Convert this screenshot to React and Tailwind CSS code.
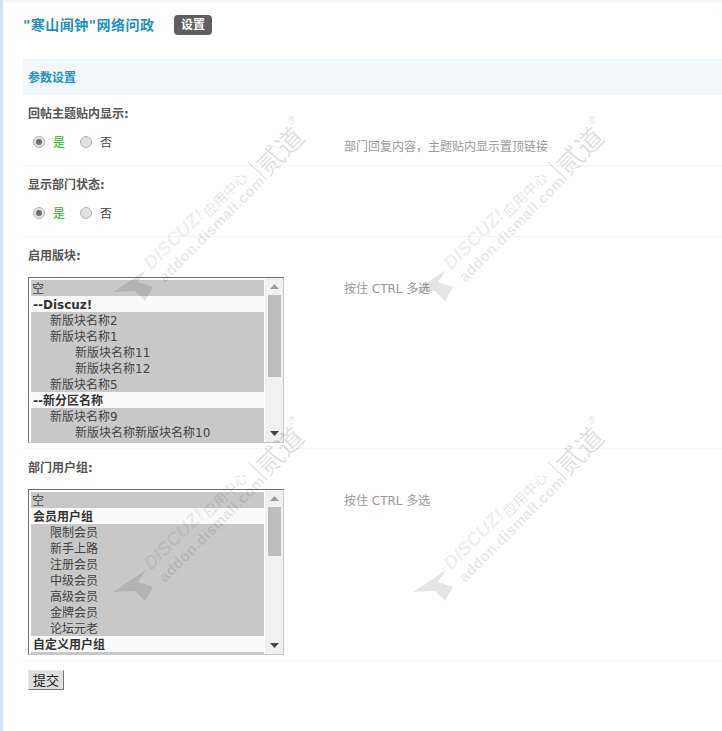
const font = { fontFamily: '"DejaVu Sans","Noto Sans CJK SC",sans-serif' };

function Watermark() {
  return (
    <svg width="300" height="300" viewBox="0 0 300 300" className="block overflow-visible shrink-0">
      <polygon points="113,292 146,270 138,282 153,287 145,301 135,291" fill="#000" fillOpacity="0.1" />
      <g fill="#000">
        <text transform="translate(151,271) rotate(-45)" fillOpacity="0.08" fontFamily="Liberation Sans" fontStyle="italic" fontWeight="700" fontSize="19">DISCUZ!</text>
        <text transform="translate(209,218) rotate(-45)" fillOpacity="0.12" fontFamily="Noto Sans CJK SC" fontSize="14">应用中心</text>
        <text transform="translate(165,283) rotate(-45)" fillOpacity="0.1" fontFamily="Liberation Sans" fontWeight="700" fontSize="15" letterSpacing="0.4">addon.dismall.com</text>
        <text transform="translate(268,177) rotate(-45)" fillOpacity="0.12" fontFamily="Noto Sans CJK SC" fontSize="27">贰道</text>
        <text transform="translate(288,124)" fillOpacity="0.16" fontFamily="Liberation Sans" fontSize="10">®</text>
      </g>
      <line x1="248" y1="162" x2="267" y2="180" stroke="#000" strokeOpacity="0.18" strokeWidth="1" />
    </svg>
  );
}

function Radio({ checked }) {
  return (
    <span className="w-[12px] h-[12px] rounded-full border border-[#b4b4b4] bg-[#e2e2e2] flex items-center justify-center shrink-0">
      {checked && <span className="w-[6px] h-[6px] rounded-full bg-[#6e6e6e]" />}
    </span>
  );
}

function RadioRow() {
  return (
    <div className="flex items-center h-[22px] pl-[5px] text-[12px]">
      <Radio checked />
      <span className="ml-[8px] pt-[2px] text-[#22bb22]">是</span>
      <span className="ml-[15px]"><Radio /></span>
      <span className="ml-[8px] pt-[2px] text-[#444444]">否</span>
    </div>
  );
}

function Arrow({ down }) {
  return (
    <div className="h-[17px] flex items-center justify-center shrink-0">
      <svg width="9" height="5" viewBox="0 0 9 5">
        <polygon points={down ? "0,0 9,0 4.5,5" : "0,5 9,5 4.5,0"} fill={down ? "#444444" : "#a0a0a0"} />
      </svg>
    </div>
  );
}

function ListBox({ rows, thumbHeight }) {
  return (
    <div className="w-[256px] h-[166px] border-t border-l border-t-[#6f6f6f] border-l-[#6f6f6f] border-r border-b border-r-[#c8c8c8] border-b-[#c8c8c8] bg-white flex pl-[2px] pt-[2px] overflow-hidden">
      <div className="w-[233px] h-[162px] overflow-hidden shrink-0">
        {rows.map((r, i) => (
          <div
            key={i}
            className={r.group
              ? "h-[16px] leading-[18px] overflow-hidden text-[12px] font-bold text-[#333333] pl-[2px] bg-[#fafafa] whitespace-nowrap"
              : r.level === 2
                ? "h-[16px] leading-[18px] overflow-hidden text-[12px] text-[#444444] pl-[44px] bg-[#c8c8c8] whitespace-nowrap"
                : r.level === 1
                  ? "h-[16px] leading-[18px] overflow-hidden text-[12px] text-[#444444] pl-[19px] bg-[#c8c8c8] whitespace-nowrap"
                  : "h-[16px] leading-[18px] overflow-hidden text-[12px] text-[#444444] pl-[1px] bg-[#c8c8c8] whitespace-nowrap"}
          >
            {r.t}
          </div>
        ))}
      </div>
      <div className="w-[18px] ml-[1px] -mt-[2px] h-[164px] bg-[#f1f1f1] flex flex-col shrink-0 items-center">
        <Arrow />
        <div className="w-[13px] bg-[#bebebe] shrink-0" style={{ height: thumbHeight }} />
        <div className="flex-1" />
        <Arrow down />
      </div>
    </div>
  );
}

const boards = [
  { t: "空" },
  { t: "--Discuz!", group: true },
  { t: "新版块名称2", level: 1 },
  { t: "新版块名称1", level: 1 },
  { t: "新版块名称11", level: 2 },
  { t: "新版块名称12", level: 2 },
  { t: "新版块名称5", level: 1 },
  { t: "--新分区名称", group: true },
  { t: "新版块名称9", level: 1 },
  { t: "新版块名称新版块名称10", level: 2 },
  { t: "" },
];

const groups = [
  { t: "空" },
  { t: "会员用户组", group: true },
  { t: "限制会员", level: 1 },
  { t: "新手上路", level: 1 },
  { t: "注册会员", level: 1 },
  { t: "中级会员", level: 1 },
  { t: "高级会员", level: 1 },
  { t: "金牌会员", level: 1 },
  { t: "论坛元老", level: 1 },
  { t: "自定义用户组", group: true },
  { t: "" },
];

function Row({ label, tip, children, bottom }) {
  return (
    <div className={`${bottom} border-b border-[#f5f5f5]`}>
      <div className="h-[36px] flex items-center pl-[5px] pt-[2px] text-[12px] font-bold text-[#555555]">{label}</div>
      <div className="flex pl-[5px]">
        <div className="w-[316px] shrink-0">{children}</div>
        <div className="pt-[8px] text-[12px] leading-[16px] text-[#999999]">{tip}</div>
      </div>
    </div>
  );
}

export default function App() {
  return (
    <div className="relative h-[731px] w-full overflow-hidden bg-white border-l-[3px] border-[#cfe3f2]" style={font}>
      <div className="h-[4px] bg-gradient-to-b from-[#eef6fb] to-white" />
      <div className="flex items-center h-[42px] pl-[20px]">
        <span className="text-[14px] font-bold text-[#2291bb] whitespace-nowrap w-[130px] tracking-[0.5px]">"寒山闻钟"网络问政</span>
        <span className="ml-[21px] w-[38px] h-[20px] rounded-[4px] bg-[#605e5e] text-white text-[12px] font-bold flex items-center justify-center">设置</span>
      </div>
      <div className="ml-[20px] mt-[13px]">
        <div className="h-[36px] bg-[#f2f8fc] flex items-center pl-[5px] pt-[2px] text-[12px] font-bold text-[#2291bb]">参数设置</div>
        <Row label="回帖主题贴内显示:" tip="部门回复内容，主题贴内显示置顶链接" bottom="h-[71px]"><RadioRow /></Row>
        <Row label="显示部门状态:" bottom="h-[71px]"><RadioRow /></Row>
        <Row label="启用版块:" tip="按住 CTRL 多选" bottom="h-[212px]">
          <div className="pt-[4px]"><ListBox rows={boards} thumbHeight={82} /></div>
        </Row>
        <Row label="部门用户组:" tip="按住 CTRL 多选" bottom="h-[212px]">
          <div className="pt-[4px]"><ListBox rows={groups} thumbHeight={49} /></div>
        </Row>
        <div className="pt-[9px] pl-[5px]">
          <button className="block w-[36px] h-[20px] bg-[#dedede] border border-t-[#e8e8e8] border-l-[#e8e8e8] border-r-[#777777] border-b-[#777777] text-[13px] leading-none text-[#222222]">提交</button>
        </div>
      </div>
      <div className="absolute left-[-3px] top-0 w-[600px] flex flex-wrap pointer-events-none">
        <Watermark /><Watermark /><Watermark /><Watermark />
      </div>
    </div>
  );
}
